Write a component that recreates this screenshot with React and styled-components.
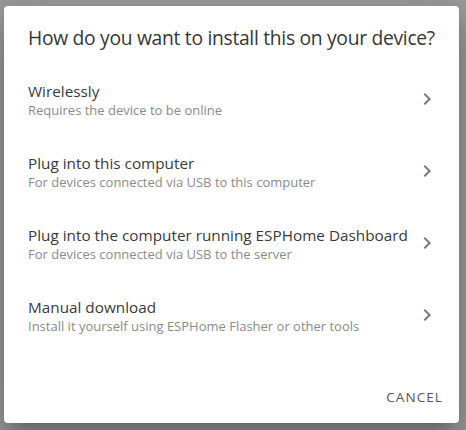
import React from "react";
import styled, { createGlobalStyle } from "styled-components";

const GlobalStyle = createGlobalStyle`
  html, body {
    margin: 0;
    padding: 0;
    background: #9b9b9b;
    font-family: "Open Sans", "Noto Sans", Arial, sans-serif;
  }
`;

const Scrim = styled.div`
  width: 466px;
  height: 430px;
  box-sizing: border-box;
  padding: 6px 7px 7px 4px;
  overflow: hidden;
`;

const Dialog = styled.div`
  height: 100%;
  background: #fff;
  border-radius: 4px;
  box-shadow: 0 11px 15px -7px rgba(0, 0, 0, 0.2),
    0 24px 38px 3px rgba(0, 0, 0, 0.14), 0 9px 46px 8px rgba(0, 0, 0, 0.12);
  display: flex;
  flex-direction: column;
`;

const Title = styled.h2`
  margin: 0;
  padding: 12px 24px 7px;
  font-size: 19.3px;
  letter-spacing: -0.3px;
  line-height: 40px;
  font-weight: 400;
  white-space: nowrap;
  color: #363636;
`;

const List = styled.ul`
  list-style: none;
  margin: 0;
  padding: 0;
`;

const Item = styled.li`
  height: 72px;
  box-sizing: border-box;
  padding: 0 20px 0 24px;
  display: flex;
  align-items: center;
  justify-content: space-between;
`;

const Texts = styled.div`
  display: flex;
  flex-direction: column;
  white-space: nowrap;
  margin-top: -3px;
`;

const Primary = styled.span`
  font-size: 15.3px;
  line-height: 20px;
  color: #3a3a3a;
`;

const Secondary = styled.span`
  font-size: 13px;
  line-height: 18px;
  color: #8a8a8a;
`;

const Chevron = styled.svg`
  width: 24px;
  height: 24px;
  fill: #7a7a7a;
  flex-shrink: 0;
  margin-bottom: 4px;
`;

const Actions = styled.div`
  margin-top: auto;
  padding: 8px;
  display: flex;
  justify-content: flex-end;
`;

const Button = styled.button`
  height: 36px;
  padding: 0 8px;
  border: none;
  background: none;
  font-family: inherit;
  font-size: 13.5px;
  letter-spacing: 1.1px;
  text-transform: uppercase;
  color: #555;
`;

const options = [
  { title: "Wirelessly", sub: "Requires the device to be online" },
  { title: "Plug into this computer", sub: "For devices connected via USB to this computer" },
  { title: "Plug into the computer running ESPHome Dashboard", sub: "For devices connected via USB to the server" },
  { title: "Manual download", sub: "Install it yourself using ESPHome Flasher or other tools" },
];

export default function App() {
  return (
    <>
      <GlobalStyle />
      <Scrim>
        <Dialog>
          <Title>How do you want to install this on your device?</Title>
          <List>
            {options.map((o) => (
              <Item key={o.title}>
                <Texts>
                  <Primary>{o.title}</Primary>
                  <Secondary>{o.sub}</Secondary>
                </Texts>
                <Chevron viewBox="0 0 24 24">
                  <path d="M10 6L8.59 7.41 13.17 12l-4.58 4.59L10 18l6-6z" />
                </Chevron>
              </Item>
            ))}
          </List>
          <Actions>
            <Button>Cancel</Button>
          </Actions>
        </Dialog>
      </Scrim>
    </>
  );
}
